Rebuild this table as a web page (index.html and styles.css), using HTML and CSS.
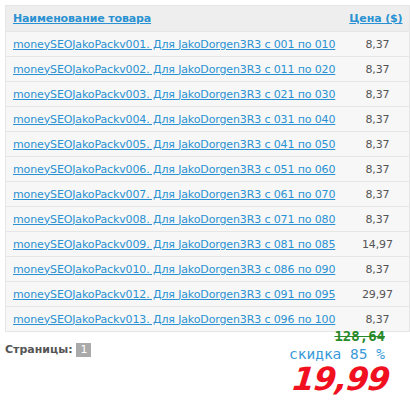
FILE: index.html
```html
<!DOCTYPE html>
<html lang="ru">
<head>
    <meta charset="UTF-8">
    <title>Товары</title>
    <link rel="stylesheet" href="styles.css">
</head>
<body>
    <table class="goods">
        <thead>
            <tr>
                <th class="name"><a href="#">Наименование товара</a></th>
                <th class="price"><a href="#">Цена ($)</a></th>
            </tr>
        </thead>
        <tbody>
            <tr><td class="name"><a href="#">moneySEOJakoPackv001. Для JakoDorgen3R3 с 001 по 010</a></td><td class="price">8,37</td></tr>
            <tr><td class="name"><a href="#">moneySEOJakoPackv002. Для JakoDorgen3R3 с 011 по 020</a></td><td class="price">8,37</td></tr>
            <tr><td class="name"><a href="#">moneySEOJakoPackv003. Для JakoDorgen3R3 с 021 по 030</a></td><td class="price">8,37</td></tr>
            <tr><td class="name"><a href="#">moneySEOJakoPackv004. Для JakoDorgen3R3 с 031 по 040</a></td><td class="price">8,37</td></tr>
            <tr><td class="name"><a href="#">moneySEOJakoPackv005. Для JakoDorgen3R3 с 041 по 050</a></td><td class="price">8,37</td></tr>
            <tr><td class="name"><a href="#">moneySEOJakoPackv006. Для JakoDorgen3R3 с 051 по 060</a></td><td class="price">8,37</td></tr>
            <tr><td class="name"><a href="#">moneySEOJakoPackv007. Для JakoDorgen3R3 с 061 по 070</a></td><td class="price">8,37</td></tr>
            <tr><td class="name"><a href="#">moneySEOJakoPackv008. Для JakoDorgen3R3 с 071 по 080</a></td><td class="price">8,37</td></tr>
            <tr><td class="name"><a href="#">moneySEOJakoPackv009. Для JakoDorgen3R3 с 081 по 085</a></td><td class="price">14,97</td></tr>
            <tr><td class="name"><a href="#">moneySEOJakoPackv010. Для JakoDorgen3R3 с 086 по 090</a></td><td class="price">8,37</td></tr>
            <tr><td class="name"><a href="#">moneySEOJakoPackv012. Для JakoDorgen3R3 с 091 по 095</a></td><td class="price">29,97</td></tr>
            <tr><td class="name"><a href="#">moneySEOJakoPackv013. Для JakoDorgen3R3 с 096 по 100</a></td><td class="price">8,37</td></tr>
        </tbody>
    </table>

    <div class="footer">
        <div class="pages">
            Страницы: <span class="page-num">1</span>
        </div>
        <div class="total">
            <div class="old-sum">128,64</div>
            <div class="discount">скидка 85 %</div>
            <div class="new-sum">19,99</div>
        </div>
    </div>
</body>
</html>
```

FILE: styles.css
```css
* {
    margin: 0;
    padding: 0;
    box-sizing: border-box;
}

body {
    font-family: 'DejaVu Sans', Verdana, sans-serif;
    font-size: 11px;
    color: #555;
    background: #fff;
    padding: 5px;
}

.goods {
    width: 400px;
    border-collapse: collapse;
    border: 1px solid #e6e6e6;
    letter-spacing: -0.13px;
}

.goods th,
.goods td {
    height: 25px;
    padding: 0 7px;
    border-bottom: 1px solid #e6e6e6;
    vertical-align: middle;
    white-space: nowrap;
}

.goods th {
    height: 26px;
    background: #eeeeee;
    text-align: left;
    font-weight: bold;
}

.goods td {
    background: #f7f7f7;
}

.goods a {
    color: #2a92d2;
    text-decoration: underline;
}

.goods td.price {
    width: 70px;
    text-align: center;
    padding-left: 10px;
}

.goods th.price {
    text-align: right;
}

.footer {
    display: flex;
    justify-content: space-between;
    align-items: flex-start;
}

.pages {
    font-weight: bold;
    margin-top: 11px;
}

.page-num {
    display: inline-block;
    background: #aaa;
    color: #fff;
    font-weight: normal;
    padding: 0 4px;
    line-height: 14px;
}

.total {
    text-align: right;
    padding-right: 20px;
    margin-top: -4px;
    font-family: 'DejaVu Sans Mono', monospace;
}

.old-sum {
    color: #2a8a2a;
    font-size: 14px;
    font-weight: bold;
    text-decoration: line-through;
    line-height: 17px;
}

.discount {
    color: #3a9ad9;
    font-size: 14.5px;
    line-height: 19px;
}

.new-sum {
    display: inline-block;
    color: #f01020;
    font-family: 'DejaVu Sans', sans-serif;
    font-size: 32px;
    font-weight: bold;
    font-style: italic;
    line-height: 30px;
    letter-spacing: -1px;
    margin-right: -4px;
    transform: skewX(-6deg);
}
```
